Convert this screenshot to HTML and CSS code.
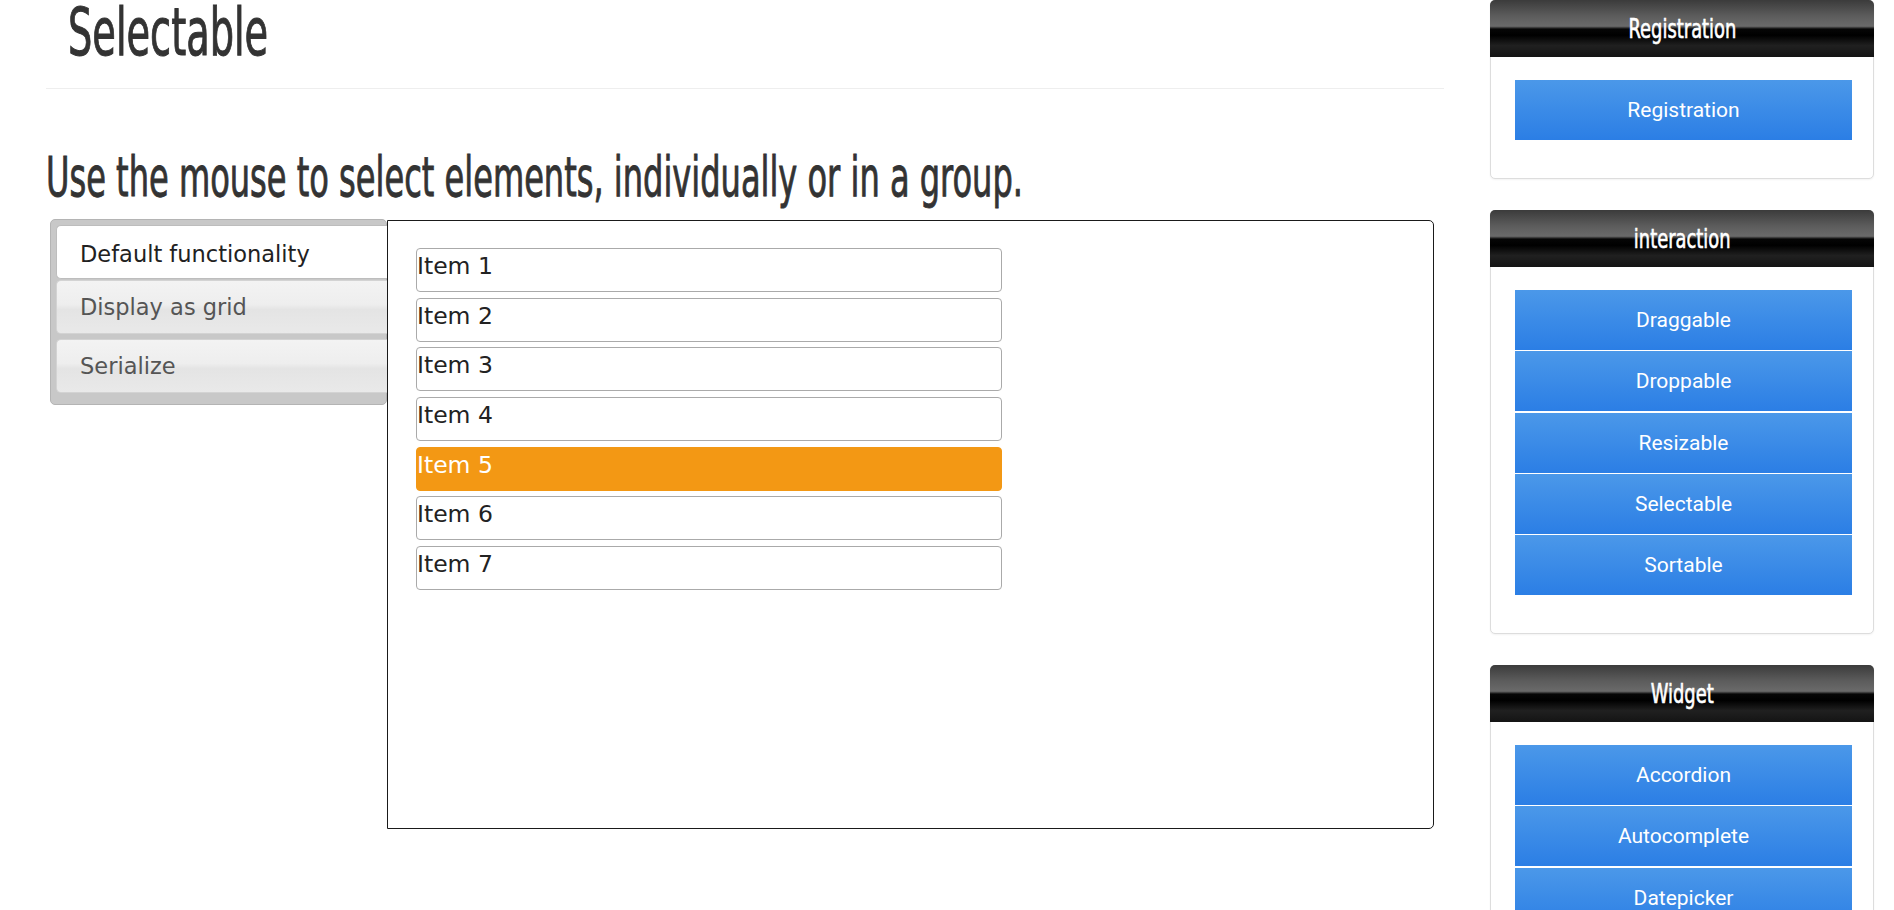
FILE: index.html
```html
<!DOCTYPE html>
<html lang="en">
<head>
<meta charset="utf-8">
<title>Selectable</title>
<link rel="stylesheet" href="styles.css">
</head>
<body>
<div class="page">
  <main class="main">
    <header class="page-head">
      <h1 class="title"><span class="squeeze">Selectable</span></h1>
    </header>
    <h2 class="lead"><span class="squeeze">Use the mouse to select elements, individually or in a group.</span></h2>
    <div class="demo">
      <ul class="tabs">
        <li class="tab active">Default functionality</li>
        <li class="tab">Display as grid</li>
        <li class="tab">Serialize</li>
      </ul>
      <div class="stage">
        <ol class="selectable">
          <li class="item">Item 1</li>
          <li class="item">Item 2</li>
          <li class="item">Item 3</li>
          <li class="item">Item 4</li>
          <li class="item selected">Item 5</li>
          <li class="item">Item 6</li>
          <li class="item">Item 7</li>
        </ol>
      </div>
    </div>
  </main>
  <aside class="sidebar">
    <section class="box">
      <h3 class="box-head"><span class="head-text">Registration</span></h3>
      <div class="box-body">
        <a class="btn" href="#">Registration</a>
      </div>
    </section>
    <section class="box">
      <h3 class="box-head"><span class="head-text">interaction</span></h3>
      <div class="box-body">
        <a class="btn" href="#">Draggable</a>
        <a class="btn" href="#">Droppable</a>
        <a class="btn" href="#">Resizable</a>
        <a class="btn" href="#">Selectable</a>
        <a class="btn" href="#">Sortable</a>
      </div>
    </section>
    <section class="box">
      <h3 class="box-head"><span class="head-text">Widget</span></h3>
      <div class="box-body">
        <a class="btn" href="#">Accordion</a>
        <a class="btn" href="#">Autocomplete</a>
        <a class="btn" href="#">Datepicker</a>
        <a class="btn" href="#">Dialog</a>
        <a class="btn" href="#">Menu</a>
      </div>
    </section>
  </aside>
</div>
</body>
</html>
```
FILE: styles.css
```css
html, body {
  margin: 0;
  padding: 0;
  background: #fff;
}

.page {
  display: flex;
  align-items: flex-start;
  gap: 46px;
  padding-left: 46px;
}

.main {
  width: 1398px;
  flex: none;
}

.page-head {
  padding: 2px 0 24px 22px;
  border-bottom: 1px solid #eee;
}

.title,
.lead,
.box-head {
  font-family: "DejaVu Sans Condensed", "DejaVu Sans", sans-serif;
  font-stretch: condensed;
  font-weight: normal;
}

.title {
  margin: 0;
  font-size: 65px;
  line-height: 62px;
  color: #333;
  -webkit-text-stroke: 1px #333;
}

.squeeze {
  display: inline-block;
  white-space: nowrap;
  transform-origin: left center;
}

.title .squeeze {
  transform: scaleX(0.655);
}

.lead {
  margin: 60px 0 0 0;
  font-size: 55px;
  line-height: 56px;
  color: #333;
  -webkit-text-stroke: 0.9px #333;
}

.lead .squeeze {
  transform: scaleX(0.648);
}

.demo {
  display: flex;
  align-items: flex-start;
  margin: 14px 10px 0 4px;
}

.tabs {
  list-style: none;
  margin: 0;
  padding: 5px 0 11px 5px;
  width: 337px;
  flex: none;
  box-sizing: border-box;
  background: #c8c8c8;
  border: 1px solid #b4b4b4;
  border-radius: 5px;
}

.tab {
  height: 54px;
  box-sizing: border-box;
  margin: 0 -1px 5px 0;
  padding: 2px 0 0 23px;
  line-height: 48px;
  font-family: "DejaVu Sans", sans-serif;
  font-size: 22.5px;
  color: #555;
  border: 1px solid #d3d3d3;
  border-right: 0;
  border-radius: 5px 0 0 5px;
  background: linear-gradient(to bottom, #f3f3f3 0%, #eeeeee 45%, #e4e4e4 55%, #e9e9e9 100%);
}

.tab.active {
  margin-bottom: 1px;
  padding-top: 4px;
  color: #212121;
  background: #fff;
  border-color: #bdbdbd;
}

.tab:last-child {
  margin-bottom: 0;
}

.stage {
  flex: 1;
  height: 609px;
  box-sizing: border-box;
  margin-top: 1px;
  padding: 27px 0 0 28px;
  background: #fff;
  border: 1px solid #1a1a1a;
  border-radius: 0 5px 5px 0;
}

.selectable {
  list-style: none;
  margin: 0;
  padding: 0;
  width: 586px;
  display: flex;
  flex-direction: column;
  gap: 5.67px;
}

.item {
  height: 44px;
  box-sizing: border-box;
  padding: 3px 0 0 0;
  font-family: "DejaVu Sans", Verdana, sans-serif;
  font-size: 23.5px;
  color: #222;
  border: 1px solid #aaa;
  border-radius: 4px;
}

.item.selected {
  color: #fff;
  background: #f39814;
  border-color: #f39814;
}

.sidebar {
  width: 384px;
  flex: none;
}

.box {
  margin-bottom: 31px;
  background: #fff;
  border: 1px solid #dddddd;
  border-radius: 5px;
  box-shadow: 0 1px 2px rgba(0, 0, 0, 0.05);
}

.box-head {
  margin: -1px -1px 0;
  height: 57px;
  font-size: 26px;
  line-height: 59px;
  color: #fff;
  text-align: center;
  border-radius: 5px 5px 0 0;
  -webkit-text-stroke: 0.6px #fff;
  background: linear-gradient(to bottom, #3b3b3b 0%, #5c5c5c 28%, #6a6a6a 46%, #060606 51%, #000 62%, #202020 80%, #141414 100%);
}

.head-text {
  display: inline-block;
  white-space: nowrap;
  transform: scaleX(0.765);
}

.box-body {
  display: flex;
  flex-direction: column;
  gap: 1.25px;
  padding: 23px 21px 38px 24px;
}

.btn {
  display: block;
  height: 60px;
  line-height: 60px;
  text-align: center;
  font-family: Roboto, "Liberation Sans", sans-serif;
  font-size: 21px;
  color: #fff;
  text-decoration: none;
  background: linear-gradient(to bottom, #4b98e9 0%, #2b7ee5 100%);
}
```
